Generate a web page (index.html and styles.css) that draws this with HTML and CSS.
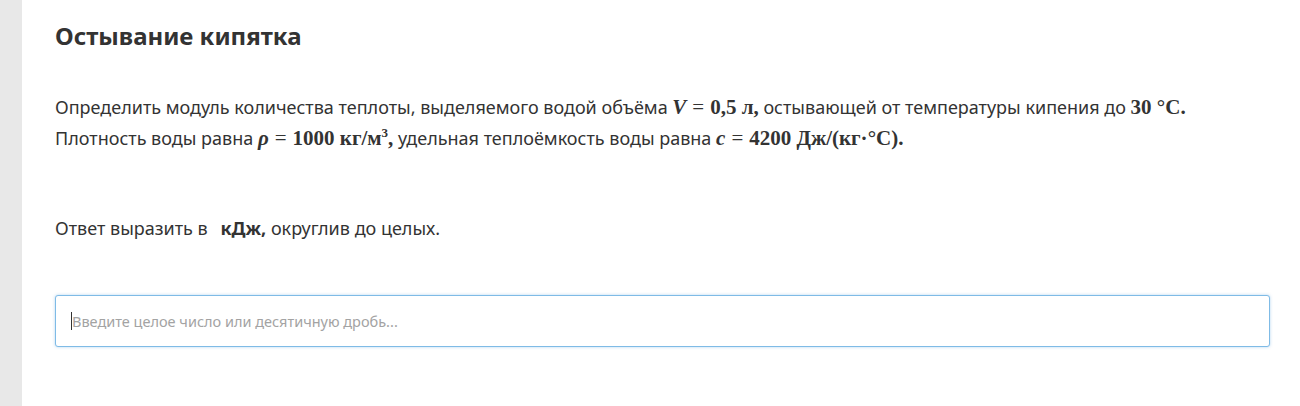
FILE: index.html
```html
<!DOCTYPE html>
<html lang="ru">
<head>
  <meta charset="UTF-8">
  <title>Остывание кипятка</title>
  <link rel="stylesheet" href="styles.css">
</head>
<body>
  <div class="side"></div>
  <div class="task">
    <h1 class="task-title">Остывание кипятка</h1>

    <p class="task-text">
      Определить модуль количества теплоты, выделяемого водой объёма <span class="m"><i>V</i><span class="eq">=</span>0,5 л,</span> остывающей от температуры кипения до <span class="m">30 °C.</span><br>
      Плотность воды равна <span class="m"><i>ρ</i><span class="eq">=</span>1000 кг/м<sup>3</sup>,</span> удельная теплоёмкость воды равна <span class="m"><i>c</i><span class="eq">=</span>4200 Дж/(кг·°C).</span>
    </p>

    <p class="task-answer">Ответ выразить в <b class="unit">кДж,</b> округлив до целых.</p>

    <div class="answer-box">
      <span class="caret"></span>
      <input type="text" class="answer-input" placeholder="Введите целое число или десятичную дробь...">
    </div>
  </div>
</body>
</html>
```

FILE: styles.css
```css
html, body {
  margin: 0;
  padding: 0;
  height: 100%;
  background: #fff;
  color: #333;
  font-family: "Noto Sans", Arial, sans-serif;
}
body {
  display: flex;
}
.side {
  width: 22px;
  flex-shrink: 0;
  background: #e8e8e8;
}
.task {
  flex: 1;
  padding: 20px 30px 0 33px;
}
.task-title {
  margin: 0;
  font-size: 24px;
  font-weight: 700;
  line-height: 32px;
  color: #333;
}
.task-text {
  margin: 40px 0 0;
  font-size: 18px;
  line-height: 31px;
}
.m {
  font-family: "Liberation Serif", "DejaVu Serif", serif;
  font-size: 21px;
  font-weight: 700;
  line-height: 0;
}
.eq {
  margin: 0 6px;
  font-weight: 400;
}
.m sup {
  font-size: 13px;
  line-height: 0;
}
.task-answer {
  margin: 62px 0 0;
  font-size: 18px;
  line-height: 24px;
}
.unit {
  margin-left: 8px;
  font-weight: 700;
}
.answer-box {
  position: relative;
  margin-top: 55px;
}
.answer-input {
  display: block;
  width: 100%;
  height: 52px;
  box-sizing: border-box;
  padding: 0 16px;
  font-family: "Noto Sans", Arial, sans-serif;
  font-size: 14.5px;
  color: #333;
  border: 1px solid #7fbbe6;
  border-radius: 3px;
  box-shadow: 0 0 3px rgba(100, 170, 225, 0.5);
  outline: none;
}
.answer-input::placeholder {
  color: #a3a3a3;
}
.caret {
  position: absolute;
  left: 16px;
  top: 17px;
  width: 1px;
  height: 18px;
  background: #333;
}
```
